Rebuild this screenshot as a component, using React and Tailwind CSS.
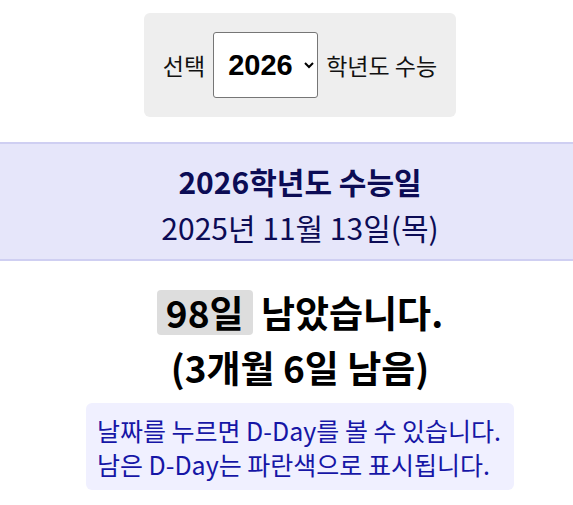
import { useState } from 'react';

const years = [2025, 2026, 2027];

const examDates = {
  2025: { date: '2024년 11월 14일(목)' },
  2026: { date: '2025년 11월 13일(목)' },
  2027: { date: '2026년 11월 19일(목)' },
};

const kr = { fontFamily: '"Noto Sans CJK KR", "Noto Sans", sans-serif' };

export default function App() {
  const [year, setYear] = useState(2026);
  const info = examDates[year];

  return (
    <div className="w-full overflow-hidden bg-white" style={kr}>
      <div className="w-[600px] flex flex-col items-center pt-[13px] pb-4">
        <div className="flex items-center gap-[8px] bg-[#eeeeee] rounded-[6px] px-[19px] h-[104px] text-[23px] text-[#111]">
          <span>선택</span>
          <select
            value={year}
            onChange={(e) => setYear(Number(e.target.value))}
            className="h-[66px] w-[105px] border border-[#767676] rounded-[3px] bg-white pl-[10px] text-[29px] font-bold text-black"
            style={{ fontFamily: '"Liberation Sans", Arial, sans-serif' }}
          >
            {years.map((y) => (
              <option key={y} value={y}>
                {y}
              </option>
            ))}
          </select>
          <span>학년도 수능</span>
        </div>

        <div className="w-full mt-[25px] bg-[#e6e6fa] border-y-2 border-[#cfcff2] flex flex-col items-center pt-[14px] pb-[9px] text-[#0c0c55]">
          <div className="text-[30px] font-bold leading-[46px]">{year}학년도 수능일</div>
          <div className="text-[30px] leading-[46px]">{info.date}</div>
        </div>

        <div className="mt-[24px] flex flex-col items-center text-[37px] font-bold text-black leading-[55px]">
          <div>
            <span className="inline-block bg-[#dddddd] rounded-[4px] px-[9px] h-[45px] leading-[45px]">98일</span> 남았습니다.
          </div>
          <div>(3개월 6일 남음)</div>
        </div>

        <div className="mt-[8px] bg-[#f0f0ff] rounded-[6px] pl-[11px] pr-[13px] pt-[10px] pb-[9px] text-[25px] leading-[34px] text-[#1616a6] text-left">
          <div>날짜를 누르면 D-Day를 볼 수 있습니다.</div>
          <div>남은 D-Day는 파란색으로 표시됩니다.</div>
        </div>
      </div>
    </div>
  );
}
